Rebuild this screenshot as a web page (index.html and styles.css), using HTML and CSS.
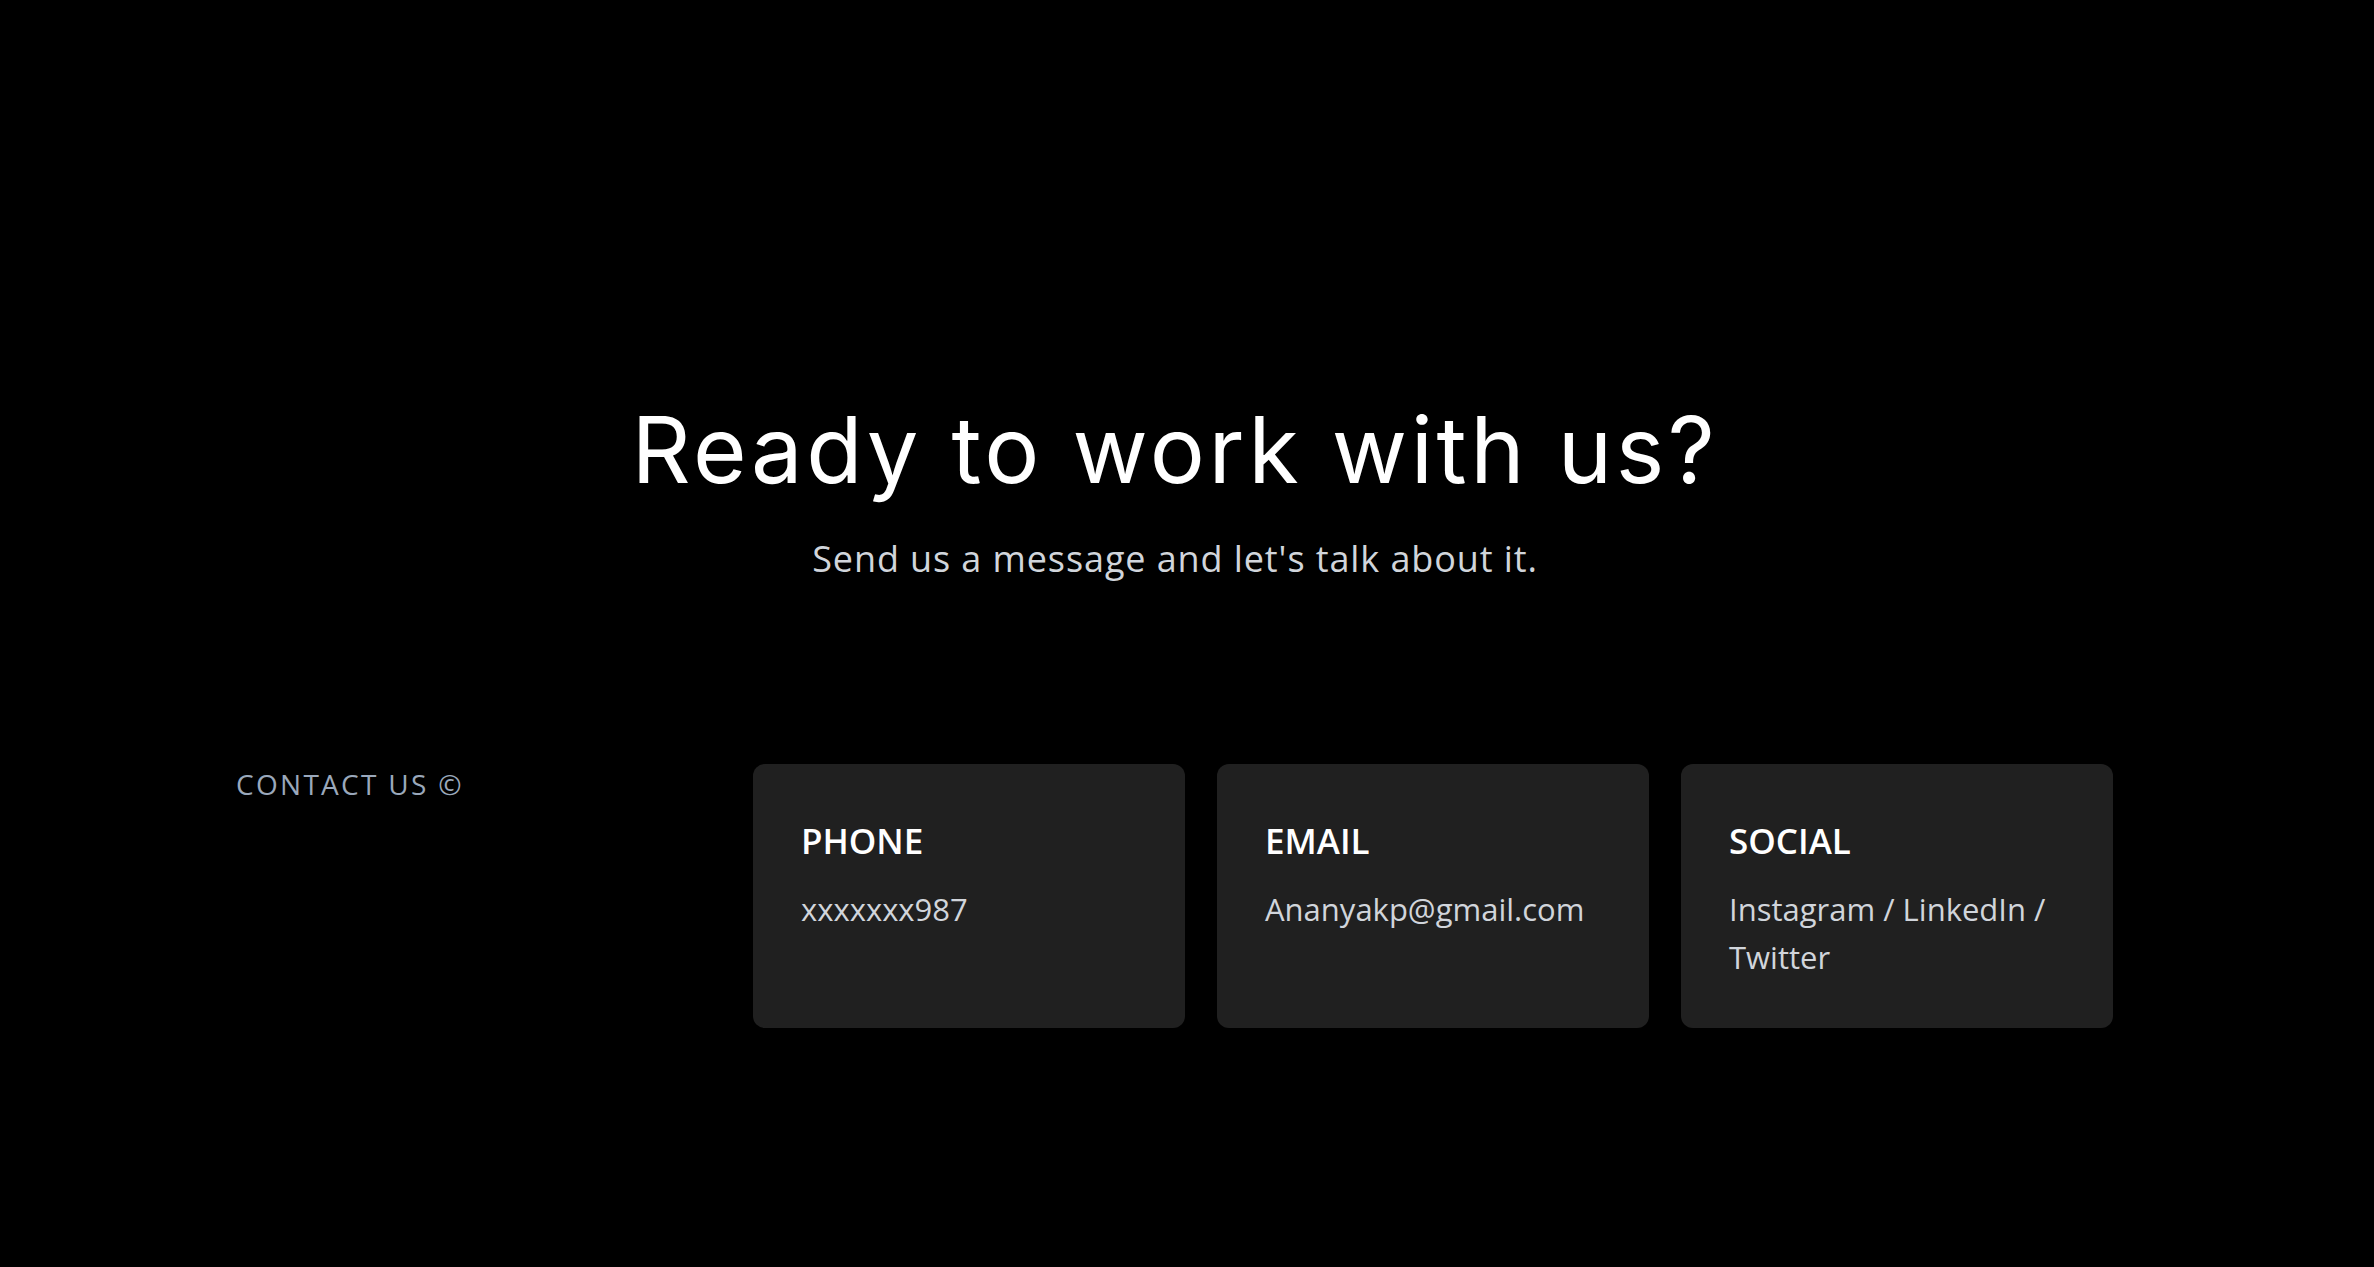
FILE: index.html
```html
<!DOCTYPE html>
<html lang="en">
<head>
<meta charset="utf-8">
<title>Contact</title>
<link rel="stylesheet" href="styles.css">
</head>
<body>
<main class="page">
  <section class="hero">
    <h1 class="hero-title">Ready to work with us?</h1>
    <p class="hero-sub">Send us a message and let's talk about it.</p>
  </section>
  <section class="contact">
    <div class="contact-label">CONTACT US ©</div>
    <div class="cards">
      <div class="card">
        <h3 class="card-title">PHONE</h3>
        <p class="card-text">xxxxxxx987</p>
      </div>
      <div class="card">
        <h3 class="card-title">EMAIL</h3>
        <p class="card-text">Ananyakp@gmail.com</p>
      </div>
      <div class="card">
        <h3 class="card-title">SOCIAL</h3>
        <p class="card-text">Instagram / LinkedIn / Twitter</p>
      </div>
    </div>
  </section>
</main>
</body>
</html>
```
FILE: styles.css
```css
* { box-sizing: border-box; }
html, body {
  margin: 0;
  padding: 0;
  background: #000;
}
body {
  font-family: "Open Sans", "Noto Sans", sans-serif;
  color: #fff;
}
.page {
  height: 1267px;
  overflow: hidden;
}
.hero {
  padding-top: 392px;
  padding-right: 24px;
  text-align: center;
}
.hero-title {
  margin: 0;
  font-family: Inter, "Noto Sans", sans-serif;
  font-weight: 400;
  font-size: 92px;
  line-height: 116px;
  letter-spacing: 3.6px;
  color: #fff;
}
.hero-sub {
  margin: 27px 0 0;
  font-size: 36px;
  line-height: 48px;
  letter-spacing: 0.9px;
  color: #d1d5db;
}
.contact {
  display: flex;
  align-items: flex-start;
  margin-top: 181px;
  padding-left: 236px;
}
.contact-label {
  width: 517px;
  flex: none;
  padding-top: 0;
  font-size: 28px;
  line-height: 40px;
  letter-spacing: 2.3px;
  color: #9aa8bb;
}
.cards {
  display: grid;
  grid-template-columns: repeat(3, 432px);
  gap: 32px;
}
.card {
  background: #202020;
  border-radius: 12px;
  height: 264px;
  padding: 53px 48px 0;
}
.card-title {
  margin: 0;
  font-size: 35px;
  line-height: 48px;
  font-weight: 600;
  color: #fff;
}
.card-text {
  margin: 20px 0 0;
  font-size: 31px;
  line-height: 48px;
  color: #d1d5db;
}
```
